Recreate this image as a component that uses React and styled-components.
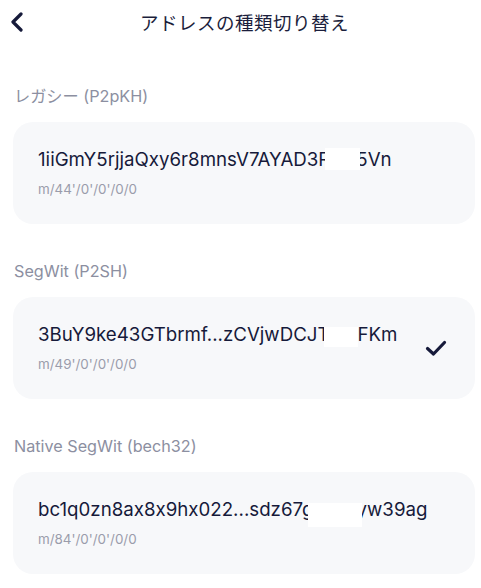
import React from "react";
import styled, { createGlobalStyle } from "styled-components";

const Global = createGlobalStyle`
  html, body { margin: 0; padding: 0; background: #ffffff; }
  body {
    font-family: Inter, "Noto Sans CJK JP", sans-serif;
    font-feature-settings: "calt" 0;
    -webkit-font-smoothing: antialiased;
  }
`;

const Page = styled.div`
  width: 481px;
  min-height: 588px;
  background: #ffffff;
  display: flex;
  flex-direction: column;
`;

const Header = styled.header`
  height: 44px;
  display: grid;
  grid-template-columns: 48px 1fr 40px;
  align-items: center;
`;

const BackButton = styled.button`
  border: 0;
  background: transparent;
  padding: 0 0 0 10px;
  height: 44px;
  display: flex;
  align-items: center;
  cursor: pointer;
`;

const Title = styled.h1`
  margin: 0;
  text-align: center;
  font-family: "Noto Sans CJK JP", sans-serif;
  font-weight: 400;
  font-size: 18.5px;
  line-height: 24px;
  color: #1b1e3c;
  letter-spacing: 0.5px;
`;

const List = styled.div`
  display: flex;
  flex-direction: column;
  padding: 42px 6px 0 13px;
`;

const Section = styled.section`
  display: flex;
  flex-direction: column;
  & + & { margin-top: 37px; }
`;

const Label = styled.div`
  font-family: Inter, "Noto Sans CJK JP", sans-serif;
  font-size: 16.2px;
  line-height: 20px;
  color: #8c8fa1;
  padding-left: 1px;
  margin-bottom: 16px;
`;

const Card = styled.div`
  background: #f7f8fa;
  border-radius: 20px;
  padding: 26px 28px 26px 25px;
  display: flex;
  align-items: center;
  justify-content: space-between;
`;

const Info = styled.div`
  display: flex;
  flex-direction: column;
  gap: 8px;
`;

const AddressLine = styled.div`
  font-size: 18.7px;
  line-height: 24px;
  color: #161a3a;
  white-space: nowrap;
`;

const Mask = styled.span`
  display: inline-block;
  vertical-align: top;
  position: relative;
  z-index: 1;
  background: #ffffff;
  width: ${(p) => p.$w}px;
  height: ${(p) => p.$h}px;
  top: ${(p) => p.$top}px;
  margin-left: ${(p) => p.$ml}px;
  margin-right: ${(p) => p.$mr}px;
`;

const Path = styled.div`
  font-size: 13.4px;
  line-height: 18px;
  color: #9a9cab;
`;

const Check = () => (
  <svg width="22" height="18" viewBox="0 0 22 18" fill="none">
    <path d="M2.5 9.5 L8.5 15 L19.5 3.5" stroke="#161a3a" strokeWidth="3.2" strokeLinecap="round" strokeLinejoin="round" />
  </svg>
);

const Chevron = () => (
  <svg width="14" height="20" viewBox="0 0 14 20" fill="none">
    <path d="M11 2 L3 10 L11 18" stroke="#161a3a" strokeWidth="3.2" strokeLinecap="round" strokeLinejoin="round" />
  </svg>
);

const items = [
  {
    label: "レガシー (P2pKH)",
    before: "1iiGmY5rjjaQxy6r8mnsV7AYAD3R",
    after: "5Vn",
    path: "m/44'/0'/0'/0/0",
    mask: { w: 35, h: 22, top: 0, ml: -5, mr: -4 },
    selected: false,
  },
  {
    label: "SegWit (P2SH)",
    before: "3BuY9ke43GTbrmf...zCVjwDCJT",
    after: "FKm",
    path: "m/49'/0'/0'/0/0",
    mask: { w: 34, h: 20, top: 4, ml: -6, mr: 0 },
    selected: true,
  },
  {
    label: "Native SegWit (bech32)",
    before: "bc1q0zn8ax8x9hx022...sdz67g",
    after: "yw39ag",
    path: "m/84'/0'/0'/0/0",
    mask: { w: 54, h: 24, top: 5, ml: -6, mr: -5 },
    selected: false,
  },
];

export default function App() {
  return (
    <Page>
      <Global />
      <Header>
        <BackButton aria-label="back">
          <Chevron />
        </BackButton>
        <Title>アドレスの種類切り替え</Title>
        <span />
      </Header>
      <List>
        {items.map((it) => (
          <Section key={it.path}>
            <Label>{it.label}</Label>
            <Card>
              <Info>
                <AddressLine>
                  {it.before}
                  <Mask $w={it.mask.w} $h={it.mask.h} $top={it.mask.top} $ml={it.mask.ml} $mr={it.mask.mr} />
                  {it.after}
                </AddressLine>
                <Path>{it.path}</Path>
              </Info>
              {it.selected && <Check />}
            </Card>
          </Section>
        ))}
      </List>
    </Page>
  );
}
